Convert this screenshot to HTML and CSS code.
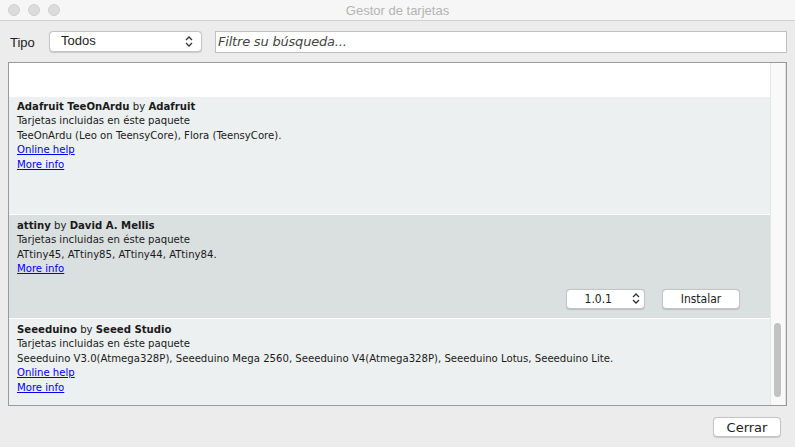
FILE: index.html
```html
<!DOCTYPE html>
<html lang="es">
<head>
<meta charset="utf-8">
<link rel="stylesheet" href="styles.css">
</head>
<body>
<div class="window">
  <div class="titlebar">
    <div class="lights"><span class="light"></span><span class="light"></span><span class="light"></span></div>
    <div class="title">Gestor de tarjetas</div>
  </div>
  <div class="toolbar">
    <span class="label">Tipo</span>
    <div class="select type-select"><span>Todos</span>
      <svg class="updown" width="8" height="11" viewBox="0 0 8 11"><path d="M1 4 L4 1 L7 4 M1 7 L4 10 L7 7" fill="none" stroke="#333" stroke-width="1.3"/></svg>
    </div>
    <div class="search"><span>Filtre su búsqueda...</span></div>
  </div>
  <div class="listbox">
    <div class="list">
      <div class="item blank"></div>
      <div class="item i1">
        <div class="line"><b>Adafruit TeeOnArdu</b> by <b>Adafruit</b></div>
        <div class="line">Tarjetas incluidas en éste paquete</div>
        <div class="line">TeeOnArdu (Leo on TeensyCore), Flora (TeensyCore).</div>
        <div class="line"><a href="#">Online help</a></div>
        <div class="line"><a href="#">More info</a></div>
      </div>
      <div class="item i2 sel">
        <div class="line"><b>attiny</b> by <b>David A. Mellis</b></div>
        <div class="line">Tarjetas incluidas en éste paquete</div>
        <div class="line">ATtiny45, ATtiny85, ATtiny44, ATtiny84.</div>
        <div class="line"><a href="#">More info</a></div>
        <div class="actions">
          <div class="select ver-select"><span>1.0.1</span>
            <svg class="updown" width="8" height="11" viewBox="0 0 8 11"><path d="M1 4 L4 1 L7 4 M1 7 L4 10 L7 7" fill="none" stroke="#333" stroke-width="1.3"/></svg>
          </div>
          <div class="btn install">Instalar</div>
        </div>
      </div>
      <div class="item i3">
        <div class="line"><b>Seeeduino</b> by <b>Seeed Studio</b></div>
        <div class="line">Tarjetas incluidas en éste paquete</div>
        <div class="line">Seeeduino V3.0(Atmega328P), Seeeduino Mega 2560, Seeeduino V4(Atmega328P), Seeeduino Lotus, Seeeduino Lite.</div>
        <div class="line"><a href="#">Online help</a></div>
        <div class="line"><a href="#">More info</a></div>
      </div>
    </div>
    <div class="scrollbar"><div class="thumb"></div></div>
  </div>
  <div class="footer"><div class="btn close">Cerrar</div></div>
</div>
</body>
</html>
```
FILE: styles.css
```css
* { box-sizing: border-box; }
html, body { margin: 0; padding: 0; }
body { width: 795px; height: 447px; overflow: hidden; background: #ececec; font-family: "Liberation Sans", Arial, sans-serif; }
.window { width: 795px; height: 447px; display: flex; flex-direction: column; background: #ececec; }
.titlebar { height: 21px; background: #f6f6f6; border-bottom: 1px solid #d1d1d1; display: flex; align-items: center; position: relative; }
.lights { display: flex; gap: 8px; padding-left: 8px; }
.light { width: 12px; height: 12px; border-radius: 50%; background: #dcdcdc; border: 1px solid #d0d0d0; }
.title { position: absolute; left: 0; right: 0; top: 3px; text-align: center; font-size: 13px; color: #b4b4b4; }
.toolbar { height: 41px; display: flex; align-items: center; padding: 0 8px 0 10px; }
.label { font-size: 13px; color: #222; width: 39px; margin-top: 1px; }
.select { background: #fff; border: 1px solid #c4c4c4; border-radius: 4px; display: flex; align-items: center; justify-content: space-between; font-size: 13px; color: #222; box-shadow: 0 0.5px 1px rgba(0,0,0,0.15); }
.type-select { width: 153px; height: 21px; padding: 0 8px 0 11px; }
.type-select span { margin-top: -2px; }
.search { margin-left: 13px; flex: 1; height: 22px; background: #fff; border: 1px solid #c0c0c0; display: flex; align-items: center; padding-left: 2px; font-family: "DejaVu Sans", sans-serif; font-style: italic; font-size: 13px; color: #444; letter-spacing: -0.2px; }
.listbox { margin: 0 8px 0 8px; height: 344px; border: 1px solid #9a9a9a; display: flex; background: #fff; overflow: hidden; }
.list { flex: 1; display: flex; flex-direction: column; gap: 1px; background: #fff; font-family: "DejaVu Sans Condensed", "DejaVu Sans", Verdana, sans-serif; font-stretch: condensed; font-size: 11.25px; color: #1a1a1a; overflow: hidden; }
.item { padding: 3px 8px 0 8px; background: #ecf0f0; flex-shrink: 0; }
.item.blank { height: 33px; background: #fff; }
.item.i1 { height: 117px; padding-top: 3px; }
.item.i2 { height: 103px; background: #dadfe0; padding-top: 4px; }
.item.i3 { height: 88px; padding-top: 4px; }
.line { height: 14.4px; line-height: 14.4px; white-space: nowrap; }
.line b { font-weight: bold; }
a { color: #0000ee; text-decoration: underline; }
.actions { display: flex; justify-content: flex-end; gap: 17px; margin-top: 12px; padding-right: 22px; }
.ver-select { width: 79px; height: 20px; padding: 0 4px 0 0; justify-content: flex-end; gap: 20px; font-family: "DejaVu Sans", sans-serif; font-size: 12px; }
.btn { background: #fff; border: 1px solid #c4c4c4; border-radius: 4px; box-shadow: 0 0.5px 1px rgba(0,0,0,0.15); display: flex; align-items: center; justify-content: center; font-family: "DejaVu Sans", sans-serif; font-size: 12px; color: #222; }
.install { width: 78px; height: 20px; }
.scrollbar { width: 16px; background: #f9f9f9; border-left: 1px solid #e6e6e6; border-right: 1px solid #e0e0e0; position: relative; }
.thumb { position: absolute; left: 3px; width: 7px; top: 260px; height: 74px; border-radius: 4px; background: #c2c2c2; }
.footer { display: flex; justify-content: flex-end; padding: 11px 14px 0 0; }
.close { width: 68px; height: 20px; font-size: 13px; }
```
